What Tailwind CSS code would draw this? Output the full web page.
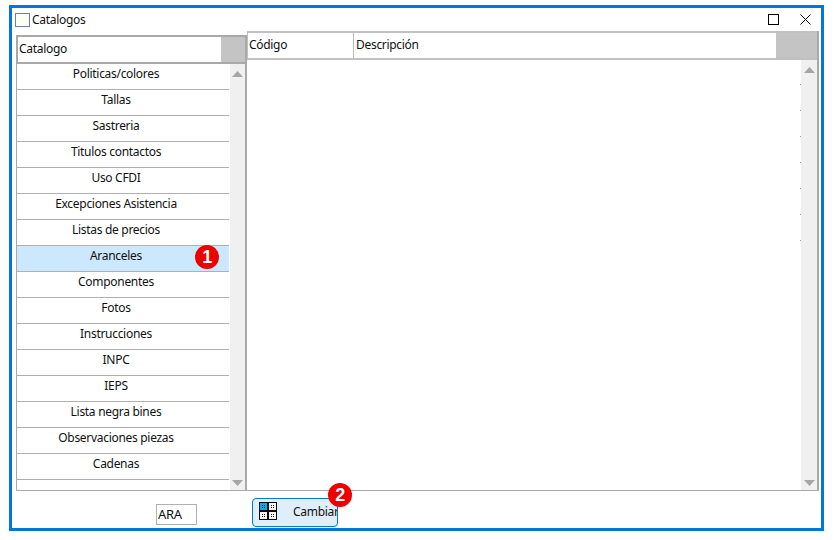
<!DOCTYPE html>
<html><head><meta charset="utf-8"><script src="https://cdn.jsdelivr.net/npm/@tailwindcss/browser@4"></script></head>
<body class="w-[834px] h-[540px] bg-white overflow-hidden font-['Noto_Sans',sans-serif] text-[12px] tracking-[-0.3px] text-[#111]">
<div class="relative ml-[9px] mt-[5px] w-[815px] h-[526px] border-[3px] border-[#0078d7] bg-white flex flex-col">
  <div class="h-[23px] flex items-center pl-[3px] pr-[10px] shrink-0">
    <div class="w-[15px] h-[14px] border border-[#6d7fa8] bg-[#fffef4] mr-[2px]"></div>
    <span>Catalogos</span>
    <svg class="ml-auto mr-[21px] -mt-[1px]" width="11" height="11" viewBox="0 0 11 11"><rect x="0.5" y="0.5" width="10" height="10" fill="none" stroke="#000"/></svg>
    <svg class="-mt-[1px]" width="11" height="11" viewBox="0 0 11 11"><path d="M0.5 0.5L10.5 10.5M10.5 0.5L0.5 10.5" stroke="#000" fill="none"/></svg>
  </div>
  <div class="flex h-[460px] pl-[4px] shrink-0">
    <div class="w-[231px] mt-[4px] flex flex-col border-r-2 border-[#a9a9a9] border-b border-b-[#a9a9a9]">
      <div class="h-[29px] shrink-0 border-y-2 border-l-2 border-[#a9a9a9] flex">
        <div class="w-[203px] bg-white flex items-center pl-[1px] pb-[2px]">Catalogo</div>
        <div class="flex-1 bg-[#c4c4c4]"></div>
      </div>
      <div class="flex flex-1 min-h-0 border-l border-[#a9a9a9]">
        <div class="w-[212px] flex flex-col text-center">
          <div class="h-[26px] shrink-0 border-b border-[#b0b0b0] flex items-center justify-center pb-[6px] pr-[14px]">Politicas/colores</div>
          <div class="h-[26px] shrink-0 border-b border-[#b0b0b0] flex items-center justify-center pb-[6px] pr-[14px]">Tallas</div>
          <div class="h-[26px] shrink-0 border-b border-[#b0b0b0] flex items-center justify-center pb-[6px] pr-[14px]">Sastreria</div>
          <div class="h-[26px] shrink-0 border-b border-[#b0b0b0] flex items-center justify-center pb-[6px] pr-[14px]">Titulos contactos</div>
          <div class="h-[26px] shrink-0 border-b border-[#b0b0b0] flex items-center justify-center pb-[6px] pr-[14px]">Uso CFDI</div>
          <div class="h-[26px] shrink-0 border-b border-[#b0b0b0] flex items-center justify-center pb-[6px] pr-[14px]">Excepciones Asistencia</div>
          <div class="h-[26px] shrink-0 border-b border-[#b0b0b0] flex items-center justify-center pb-[6px] pr-[14px]">Listas de precios</div>
          <div class="h-[26px] shrink-0 border-b border-[#b0b0b0] flex items-center justify-center pb-[6px] pr-[14px] bg-[#cce8ff]">Aranceles</div>
          <div class="h-[26px] shrink-0 border-b border-[#b0b0b0] flex items-center justify-center pb-[6px] pr-[14px]">Componentes</div>
          <div class="h-[26px] shrink-0 border-b border-[#b0b0b0] flex items-center justify-center pb-[6px] pr-[14px]">Fotos</div>
          <div class="h-[26px] shrink-0 border-b border-[#b0b0b0] flex items-center justify-center pb-[6px] pr-[14px]">Instrucciones</div>
          <div class="h-[26px] shrink-0 border-b border-[#b0b0b0] flex items-center justify-center pb-[6px] pr-[14px]">INPC</div>
          <div class="h-[26px] shrink-0 border-b border-[#b0b0b0] flex items-center justify-center pb-[6px] pr-[14px]">IEPS</div>
          <div class="h-[26px] shrink-0 border-b border-[#b0b0b0] flex items-center justify-center pb-[6px] pr-[14px]">Lista negra bines</div>
          <div class="h-[26px] shrink-0 border-b border-[#b0b0b0] flex items-center justify-center pb-[6px] pr-[14px]">Observaciones piezas</div>
          <div class="h-[26px] shrink-0 border-b border-[#b0b0b0] flex items-center justify-center pb-[6px] pr-[14px]">Cadenas</div>
        </div>
        <div class="flex-1 ml-px bg-[#f0f0f0] flex flex-col items-center justify-between pt-[7px] pb-[4px]">
          <svg width="11" height="6" viewBox="0 0 11 6"><path d="M5.5 0L11 6H0Z" fill="#a6a6a6"/></svg>
          <svg width="11" height="6" viewBox="0 0 11 6"><path d="M0 0H11L5.5 6Z" fill="#a6a6a6"/></svg>
        </div>
      </div>
    </div>
    <div class="w-[572px] flex flex-col border-b border-[#a9a9a9] border-r-2">
      <div class="h-[29px] shrink-0 border-t-2 border-b-2 border-l border-[#c0c0c0] flex">
        <div class="w-[106px] border-r border-[#b8b8b8] flex items-center pl-[1px] pb-[2px]">Código</div>
        <div class="w-[422px] flex items-center pl-[2px] pb-[2px]">Descripción</div>
        <div class="flex-1 bg-[#c4c4c4]"></div>
      </div>
      <div class="flex flex-1 min-h-0">
        <div class="flex-1 relative">
          <i class="absolute left-[553px] top-[24px] w-px h-px bg-[#999]"></i>
          <i class="absolute left-[553px] top-[50px] w-px h-px bg-[#999]"></i>
          <i class="absolute left-[553px] top-[76px] w-px h-px bg-[#999]"></i>
          <i class="absolute left-[553px] top-[102px] w-px h-px bg-[#999]"></i>
          <i class="absolute left-[553px] top-[128px] w-px h-px bg-[#999]"></i>
          <i class="absolute left-[553px] top-[154px] w-px h-px bg-[#999]"></i>
          <i class="absolute left-[553px] top-[180px] w-px h-px bg-[#999]"></i>
        </div>
        <div class="w-[16px] bg-[#f0f0f0] flex flex-col items-center justify-between pt-[7px] pb-[4px]">
          <svg width="11" height="6" viewBox="0 0 11 6"><path d="M5.5 0L11 6H0Z" fill="#a6a6a6"/></svg>
          <svg width="11" height="6" viewBox="0 0 11 6"><path d="M0 0H11L5.5 6Z" fill="#a6a6a6"/></svg>
        </div>
      </div>
    </div>
  </div>
  <div class="flex-1 relative flex">
    <div class="ml-[144px] mt-[13px] w-[41px] h-[21px] border border-[#b0b0b0] flex items-center pl-[1px] text-[13px]">ARA</div>
    <div class="ml-[55px] mt-[7px] w-[86px] h-[29px] border border-[#0078d7] rounded-[4px] bg-[#e0eefa] flex items-center overflow-hidden">
      <svg class="ml-[6px] shrink-0 -mt-[3px]" width="18" height="18" viewBox="0 0 18 18" shape-rendering="crispEdges">
        <rect width="18" height="18" fill="#0a0a0a"/>
        <rect x="1" y="1" width="7" height="7" fill="#00adef"/>
        <rect x="10" y="1" width="7" height="7" fill="#f4f4f4"/>
        <rect x="1" y="10" width="7" height="7" fill="#f4f4f4"/>
        <rect x="10" y="10" width="7" height="7" fill="#f4f4f4"/>
        <path d="M3 3h1v1H3zM5 3h1v1H5zM3 5h1v1H3zM5 5h1v1H5zM12 3h1v1h-1zM14 3h1v1h-1zM12 5h1v1h-1zM14 5h1v1h-1zM3 12h1v1H3zM5 12h1v1H5zM3 14h1v1H3zM5 14h1v1H5zM12 12h1v1h-1zM14 12h1v1h-1zM12 14h1v1h-1zM14 14h1v1h-1z" fill="#111"/>
      </svg>
      <span class="ml-[16px] pb-[2px] whitespace-nowrap">Cambiar</span>
    </div>
  </div>
  <div class="absolute left-[183px] top-[237px] w-[24px] h-[24px] rounded-full bg-[#ee0000] text-white font-bold text-[18px] flex items-center justify-center font-['Liberation_Sans',sans-serif]">1</div>
  <div class="absolute left-[316px] top-[475px] w-[24px] h-[24px] rounded-full bg-[#ee0000] text-white font-bold text-[18px] flex items-center justify-center font-['Liberation_Sans',sans-serif]">2</div>
</div>
</body></html>
